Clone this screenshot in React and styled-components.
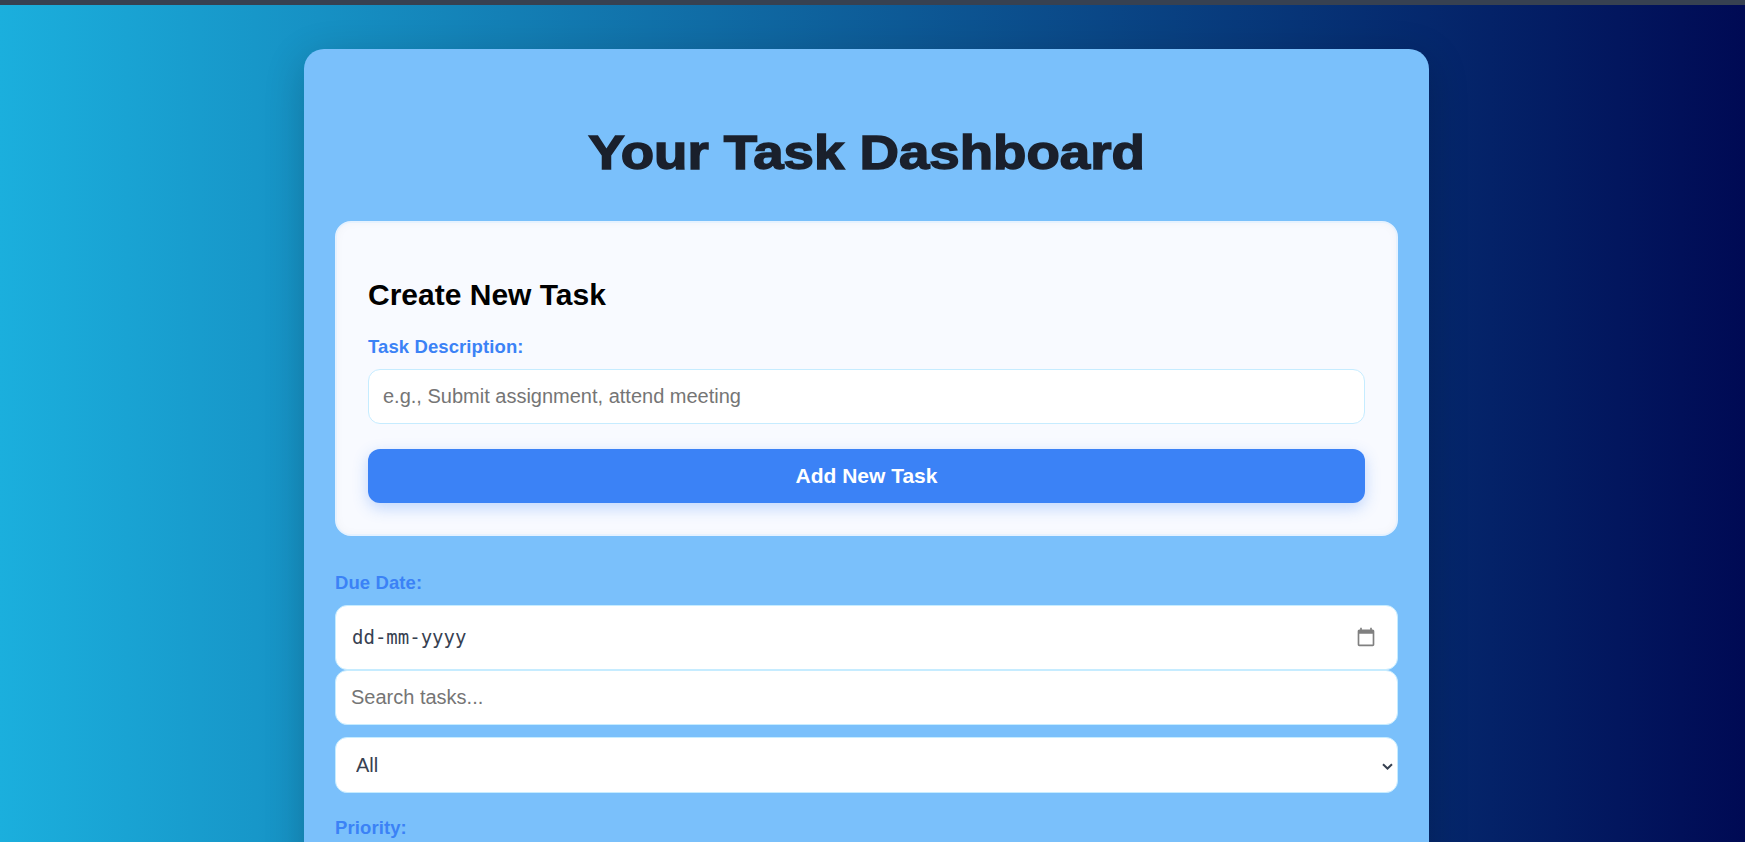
import React from "react";
import styled, { createGlobalStyle } from "styled-components";

const Global = createGlobalStyle`
  html, body { margin: 0; padding: 0; height: 100%; overflow: hidden; }
  body { font-family: "Liberation Sans", Arial, sans-serif; }
`;
const Page = styled.div`
  height: 842px; box-sizing: border-box; overflow: hidden;
  border-top: 5px solid #374151;
  background: linear-gradient(to right, #1bafdd, #000a54);
  padding: 44px 12px 0 0;
`;
const Card = styled.main`
  width: 1125px; margin: 0 auto; box-sizing: border-box;
  padding: 73px 31px 40px;
  background: #7ac0fb; border-radius: 20px;
  box-shadow: 0 10px 40px rgba(0,0,0,.2);
`;
const Title = styled.h1`
  margin: 0 0 39px; text-align: center; font-size: 49px; line-height: 60px;
  font-weight: 700; color: #1a202c;
`;
const TitleText = styled.span`
  display: inline-block; transform: scaleX(1.115);
  -webkit-text-stroke: 1.5px #1a202c;
`;
const Panel = styled.section`
  box-sizing: border-box; padding: 32px 31px 31px; background: #f8faff;
  border: 2px solid #e6f2ff; border-radius: 16px; margin-bottom: 35px;
  box-shadow: inset 0 0 10px rgba(0,0,0,.03);
`;
const Heading = styled.h2`
  margin: 23px 0 24px; font-size: 30px; line-height: 33px; font-weight: 700; color: #000;
`;
const Label = styled.label`
  display: block; margin-bottom: 10px; font-size: 18.5px; line-height: 24px; font-weight: 700;
  letter-spacing: .1px; color: #3b82f6;
`;
const field = `
  display: block; width: 100%; box-sizing: border-box; background: #fff;
  border: 1px solid #c6ecff; border-radius: 12px; outline: none;
  font-family: "Liberation Sans", Arial, sans-serif; font-size: 20px; color: #374151;
`;
const TextInput = styled.input`
  ${field}
  height: 55px; padding: 0 ${(p) => p.$pad}px;
  margin-bottom: ${(p) => p.$gap || 0}px;
  &::placeholder { color: #757575; opacity: 1; }
`;
const DateField = styled.div`
  ${field}
  display: flex; align-items: center; justify-content: space-between;
  height: 65px; padding: 0 21px 2px 16px;
`;
const DateText = styled.span`
  font-family: "DejaVu Sans Mono", "Liberation Mono", monospace; font-size: 19px; color: #374151;
`;
const SelectWrap = styled.div`
  position: relative; margin: 12px 0 23px;
`;
const Select = styled.select`
  ${field}
  appearance: none; height: 56px; padding: 0 20px;
`;
const Chevron = styled.svg`
  position: absolute; top: 26px; right: 5px; pointer-events: none;
`;
const Button = styled.button`
  display: block; width: 100%; height: 54px; border: 0; border-radius: 12px;
  background: #3b82f6; color: #fff; font-family: inherit; font-size: 21px; font-weight: 700;
  box-shadow: 0 5px 15px rgba(59,130,246,.3);
`;
const CalendarIcon = () => (
  <svg width="20" height="20" viewBox="0 0 24 24" fill="#808080" aria-hidden="true">
    <path d="M20 3h-1V1h-2v2H7V1H5v2H4c-1.1 0-2 .9-2 2v16c0 1.1.9 2 2 2h16c1.1 0 2-.9 2-2V5c0-1.1-.9-2-2-2zm0 18H4V8h16v13z" />
  </svg>
);

export default function App() {
  return (
    <Page>
      <Global />
      <Card>
        <Title><TitleText>Your Task Dashboard</TitleText></Title>
        <Panel>
          <Heading>Create New Task</Heading>
          <Label>Task Description:</Label>
          <TextInput $pad={14} $gap={25} placeholder="e.g., Submit assignment, attend meeting" />
          <Button>Add New Task</Button>
        </Panel>
        <Label>Due Date:</Label>
        <DateField>
          <DateText>dd-mm-yyyy</DateText>
          <CalendarIcon />
        </DateField>
        <TextInput $pad={15} placeholder="Search tasks..." />
        <SelectWrap>
          <Select defaultValue="All"><option>All</option><option>Active</option><option>Completed</option></Select>
          <Chevron width="11" height="7" viewBox="0 0 11 7" aria-hidden="true">
            <path d="M1 1.2 L5.5 5.5 L10 1.2" fill="none" stroke="#374151" strokeWidth="2" />
          </Chevron>
        </SelectWrap>
        <Label>Priority:</Label>
      </Card>
    </Page>
  );
}
